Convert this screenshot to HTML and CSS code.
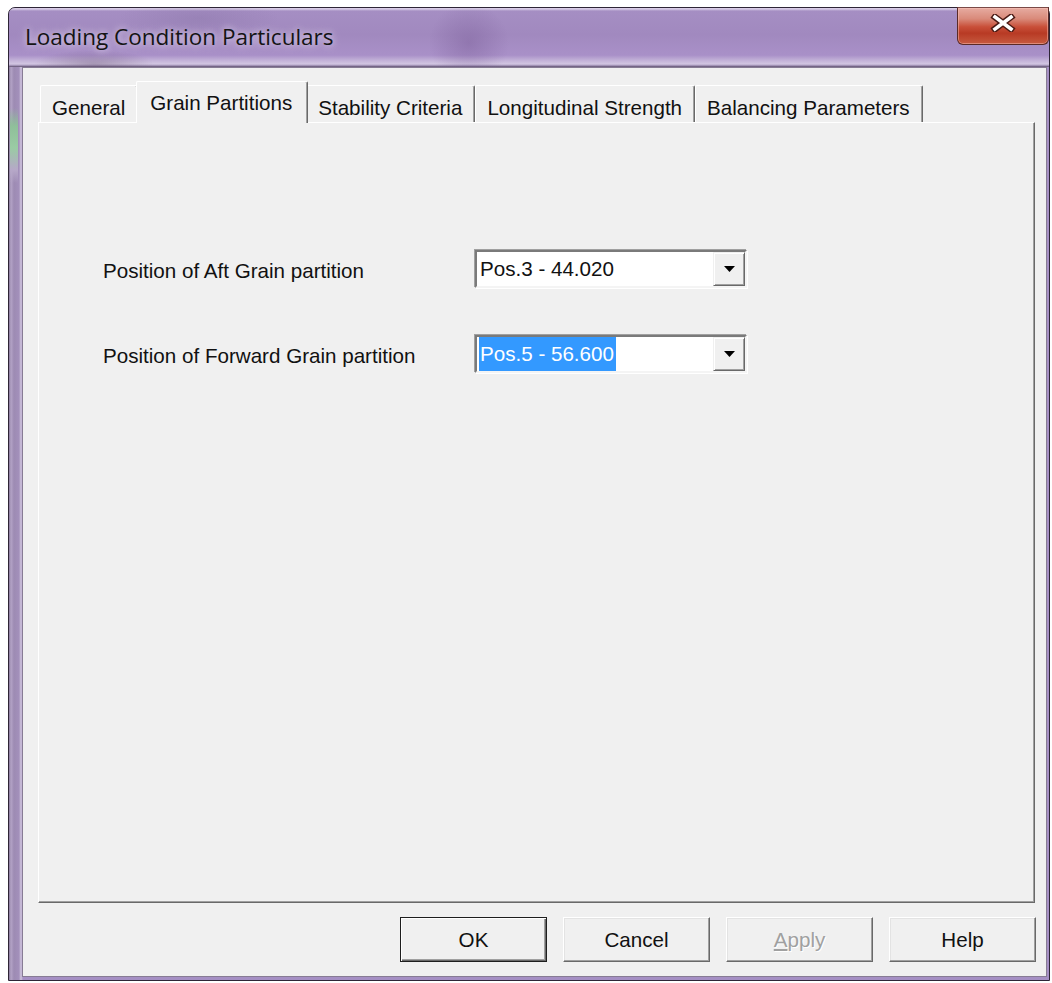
FILE: index.html
```html
<!DOCTYPE html>
<html lang="en">
<head>
<meta charset="utf-8">
<title>Loading Condition Particulars</title>
<link rel="stylesheet" href="styles.css">
</head>
<body>
<div class="window">
  <div class="titlebar">
    <span class="title">Loading Condition Particulars</span>
    <button class="close" type="button" aria-label="Close">
      <svg width="26" height="18" viewBox="0 0 26 18">
        <path d="M5 3 L21 15 M21 3 L5 15" stroke="#4a1a14" stroke-width="6.5" stroke-linecap="square" fill="none"/>
        <path d="M5 3 L21 15 M21 3 L5 15" stroke="#ffffff" stroke-width="3.6" stroke-linecap="square" fill="none"/>
      </svg>
    </button>
  </div>
  <div class="client">
    <div class="tabs">
      <div class="tab">General</div>
      <div class="tab active">Grain Partitions</div>
      <div class="tab">Stability Criteria</div>
      <div class="tab">Longitudinal Strength</div>
      <div class="tab">Balancing Parameters</div>
    </div>
    <div class="panel">
      <div class="field">
        <span class="label">Position of Aft Grain partition</span>
        <div class="combo">
          <span class="value">Pos.3 - 44.020</span>
          <span class="drop">
            <svg width="11" height="6" viewBox="0 0 11 6"><path d="M0 0 H11 L5.5 6 Z" fill="#000"/></svg>
          </span>
        </div>
      </div>
      <div class="field">
        <span class="label">Position of Forward Grain partition</span>
        <div class="combo">
          <span class="value selected">Pos.5 - 56.600</span>
          <span class="drop">
            <svg width="11" height="6" viewBox="0 0 11 6"><path d="M0 0 H11 L5.5 6 Z" fill="#000"/></svg>
          </span>
        </div>
      </div>
    </div>
    <div class="buttons">
      <button class="btn default" type="button">OK</button>
      <button class="btn" type="button">Cancel</button>
      <button class="btn disabled" type="button"><u>A</u>pply</button>
      <button class="btn" type="button">Help</button>
    </div>
  </div>
</div>
</body>
</html>
```

FILE: styles.css
```css
* {
  box-sizing: border-box;
}

body {
  margin: 0;
  background: #ffffff;
  font-family: "Liberation Sans", Arial, sans-serif;
}

/* Aero-style outer frame */
.window {
  margin: 7px 0 0 8px;
  width: 1042px;
  height: 974px;
  border: 1px solid #2e2536;
  border-radius: 7px 7px 0 0;
  display: flex;
  flex-direction: column;
  background:
    linear-gradient(to bottom, transparent 100px, #8fbf9a 118px, #9acba4 140px, #b6a8c8 162px, transparent 175px) no-repeat 1px 0 / 8px 100%,
    linear-gradient(to right, #8a7a9c 0, #b3a3c6 2px, #9d8bb3 5px, #a390bb 10px, #cfc4dc 12px, #a58fc4 14px, #a58fc4 100%);
}

.titlebar {
  height: 59px;
  flex: none;
  display: flex;
  align-items: flex-start;
  border-radius: 6px 6px 0 0;
  background:
    radial-gradient(ellipse 40px 40px at 460px 35px, rgba(110, 80, 140, 0.35), transparent),
    radial-gradient(ellipse 60px 14px at 85px 56px, rgba(90, 70, 100, 0.35), transparent),
    radial-gradient(ellipse 80px 20px at 190px 10px, rgba(120, 100, 150, 0.25), transparent),
    linear-gradient(to bottom, #d8cce6 0, #d8cce6 1px, #a58ec3 3px, #a189bf 45%, #a990c8 80%, #c6b6da 90%, #d2c6e2 95%, #9888ac 98%, #5a4c6a 100%);
}

.title {
  margin: 14px 0 0 16px;
  font-family: "Open Sans", "Noto Sans", sans-serif;
  font-size: 22.5px;
  line-height: 30px;
  color: #141414;
  text-shadow: 0 0 6px rgba(235, 225, 245, 0.8), 0 0 12px rgba(235, 225, 245, 0.6);
}

.close {
  margin: -1px 0 0 auto;
  width: 92px;
  height: 38px;
  padding: 6px 0 0 0;
  display: flex;
  justify-content: center;
  align-items: flex-start;
  border: 1px solid #5a2a26;
  border-top-color: #7a4a46;
  border-radius: 0 0 6px 6px;
  background: linear-gradient(to bottom, #e6aba0 0, #d98a7a 30%, #c9503a 52%, #b83a24 70%, #c65a40 100%);
  box-shadow: inset 0 0 0 1px rgba(255, 200, 190, 0.45);
}

/* Dialog client area */
.client {
  flex: 1;
  margin: 0 2px 3px 13px;
  border: 1px solid #877c94;
  background: #f0f0f0;
  padding: 13px 11px 14px 15px;
  display: flex;
  flex-direction: column;
  font-size: 20.6px;
  color: #111111;
}

.tabs {
  height: 41px;
  flex: none;
  display: flex;
  align-items: flex-end;
  padding-left: 2px;
}

.tab {
  height: 37px;
  padding: 10px 12px 0 11px;
  line-height: 23px;
  white-space: nowrap;
  border-top: 1px solid #ffffff;
  border-left: 1px solid #ffffff;
  border-right: 1px solid #696969;
  border-radius: 2px 2px 0 0;
  box-shadow: inset -1px 0 #a0a0a0;
  background: #f0f0f0;
}

.tab.active {
  height: 42px;
  margin: 0 -2px -1px;
  padding: 9px 15px 0 13px;
  position: relative;
  z-index: 1;
}

.panel {
  flex: 1;
  border-top: 1px solid #ffffff;
  border-left: 1px solid #ffffff;
  border-right: 1px solid #696969;
  border-bottom: 1px solid #696969;
  box-shadow: inset -1px -1px #a0a0a0;
  padding: 127px 0 0 64px;
  display: flex;
  flex-direction: column;
  gap: 47px;
}

.field {
  display: flex;
  align-items: center;
}

.label {
  width: 372px;
  line-height: 23px;
  padding-top: 3px;
  white-space: nowrap;
}

.combo {
  width: 272px;
  height: 38px;
  display: flex;
  background: #ffffff;
  border: 2px solid;
  border-color: #7a7a7a #f4f4f4 #f4f4f4 #7a7a7a;
  box-shadow: 1px 1px 0 #ffffff, -1px -1px 0 #a0a0a0;
  padding-left: 3px;
}

.value {
  flex: 1;
  display: flex;
  align-items: center;
  white-space: nowrap;
}

.value.selected {
  flex: none;
  padding: 0 2px 0 1px;
  margin-left: -1px;
  background: #3399ff;
  color: #ffffff;
}

.combo .value.selected + .drop {
  margin-left: auto;
}

.drop {
  width: 32px;
  flex: none;
  display: flex;
  align-items: center;
  justify-content: center;
  background: #f0f0f0;
  border-top: 1px solid #f0f0f0;
  border-left: 1px solid #f0f0f0;
  border-right: 1px solid #696969;
  border-bottom: 1px solid #696969;
  box-shadow: inset 1px 1px #ffffff, inset -1px -1px #a0a0a0;
}

.buttons {
  flex: none;
  display: flex;
  justify-content: flex-end;
  gap: 16px;
  margin: 14px -1px 0 0;
}

.btn {
  width: 147px;
  height: 45px;
  font: inherit;
  color: #111111;
  background: #f0f0f0;
  border: 1px solid;
  border-color: #ffffff #696969 #696969 #ffffff;
  box-shadow: inset -1px -1px #a0a0a0, inset 1px 1px #e3e3e3;
  padding: 0;
}

.btn.default {
  border-color: #1e1e1e;
  box-shadow: inset 1px 1px #ffffff, inset -1px -1px #696969, inset -2px -2px #a0a0a0;
}

.btn.disabled {
  color: #a0a0a0;
  text-shadow: 1px 1px 0 #ffffff;
}
```
